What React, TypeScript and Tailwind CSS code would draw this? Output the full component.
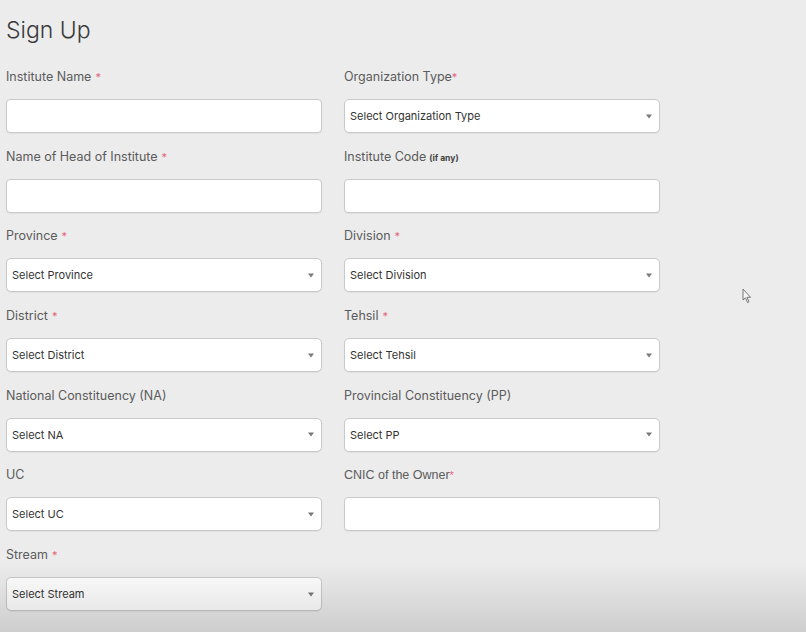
import React from "react";

const font = { fontFamily: "Inter, 'Open Sans', sans-serif" };

function Label({ text, star, small, arial, tight }: { text: string; star?: boolean; small?: string; arial?: boolean; tight?: boolean }) {
  return (
    <div
      className="h-[20px] leading-[20px] text-[12.5px] text-[#5b5b5b] whitespace-nowrap"
      style={arial ? { fontFamily: "'Liberation Sans', Arial, sans-serif", fontSize: "12.5px" } : undefined}
    >
      {text}
      {small && <span className="text-[8.5px] font-bold text-[#444] ml-[3px]">{small}</span>}
      {star && <span className={`text-[#e4667a] text-[11px] ${tight ? "" : "ml-1"}`}>*</span>}
    </div>
  );
}

function TextInput() {
  return <div className="h-[34px] w-full rounded-[4px] border border-[#c9c9c9] bg-white shadow-[0_1px_1px_rgba(0,0,0,0.05)]" />;
}

function Select({ text }: { text: string }) {
  return (
    <div className="h-[34px] w-full rounded-[5px] border border-[#c9c9c9] bg-white flex items-center justify-between pl-[5px] pr-[7px] shadow-[0_1px_1px_rgba(0,0,0,0.05)]">
      <span className="text-[11px] text-[#333]">{text}</span>
      <svg width="6" height="5" viewBox="0 0 6 5"><path d="M0 0.5 L6 0.5 L3 4.5 Z" fill="#7a7a7a" /></svg>
    </div>
  );
}

function Field({ children, label }: { children: React.ReactNode; label: React.ReactNode }) {
  return (
    <div className="flex flex-col">
      {label}
      <div className="mt-[12px]">{children}</div>
    </div>
  );
}

export default function App() {
  return (
    <div className="relative w-[806px] h-[632px] overflow-hidden bg-[#ececec]" style={font}>
      <div className="pl-[6px] pt-[14px]">
        <h1 className="text-[23px] leading-[32px] text-[#3a3a3a] font-light">Sign Up</h1>
        <div className="mt-[21px] grid grid-cols-[316px_316px] gap-x-[22px] gap-y-[13.7px]">
          <Field label={<Label text="Institute Name" star />}><TextInput /></Field>
          <Field label={<Label text="Organization Type" star tight />}><Select text="Select Organization Type" /></Field>
          <Field label={<Label text="Name of Head of Institute" star />}><TextInput /></Field>
          <Field label={<Label text="Institute Code" small="(if any)" />}><TextInput /></Field>
          <Field label={<Label text="Province" star />}><Select text="Select Province" /></Field>
          <Field label={<Label text="Division" star />}><Select text="Select Division" /></Field>
          <Field label={<Label text="District" star />}><Select text="Select District" /></Field>
          <Field label={<Label text="Tehsil" star />}><Select text="Select Tehsil" /></Field>
          <Field label={<Label text="National Constituency (NA)" />}><Select text="Select NA" /></Field>
          <Field label={<Label text="Provincial Constituency (PP)" />}><Select text="Select PP" /></Field>
          <Field label={<Label text="UC" />}><Select text="Select UC" /></Field>
          <Field label={<Label text="CNIC of the Owner" star tight arial />}><TextInput /></Field>
          <Field label={<Label text="Stream" star />}><Select text="Select Stream" /></Field>
        </div>
      </div>
      <div className="pointer-events-none absolute inset-x-0 bottom-0 h-[70px] bg-gradient-to-b from-transparent to-[rgba(0,0,0,0.13)]" />
      <svg className="absolute left-[742px] top-[288px]" width="10" height="16" viewBox="0 0 10 16">
        <path d="M1 1 L1 12 L3.5 9.8 L5.5 14.5 L7 13.8 L5 9.3 L8.5 9.3 Z" fill="#f4f4f4" stroke="#6a6a6a" strokeWidth="0.9" strokeLinejoin="round" />
      </svg>
    </div>
  );
}
